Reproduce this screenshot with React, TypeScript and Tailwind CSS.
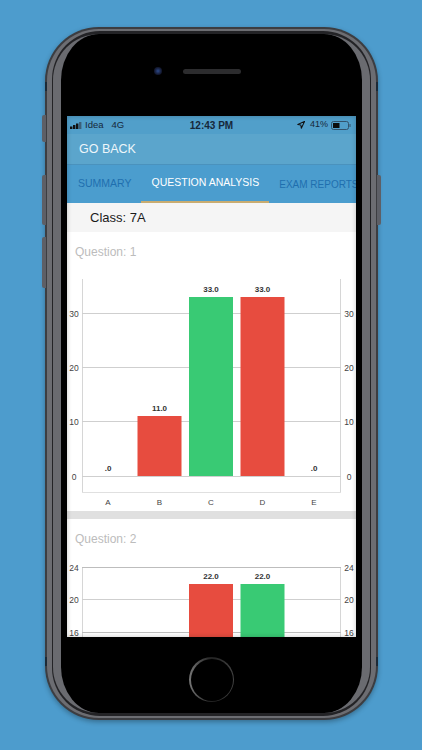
const FONT = "font-['Liberation_Sans',Arial,sans-serif]";

type Bar = { x: number; top: number; color: string; label: string };
type Tick = { y: number; label: string; strong?: boolean };

const RED = '#e74c3f';
const GREEN = '#39ca74';

function BarChart({ height, top, bottom, base, ticks, bars, categories, closed }: {
  height: number;
  top: number;
  bottom: number;
  base: number;
  ticks: Tick[];
  bars: Bar[];
  categories?: string[];
  closed?: boolean;
}) {
  return (
    <svg width={290} height={height} className="block" fontFamily="Liberation Sans, Arial, sans-serif">
      <line x1={15.5} x2={15.5} y1={top} y2={bottom} stroke="#d6d6d6" />
      <line x1={273.5} x2={273.5} y1={top} y2={bottom} stroke="#d6d6d6" />
      {closed && <line x1={15} x2={274} y1={bottom - 0.5} y2={bottom - 0.5} stroke="#e0e0e0" />}
      {ticks.map((t) => (
        <g key={t.label}>
          <line x1={15} x2={274} y1={t.y} y2={t.y} stroke={t.strong ? '#bdbdbd' : '#cfcfcf'} />
          <text x={7} y={t.y + 3} fontSize={8.5} fill="#444" textAnchor="middle">{t.label}</text>
          <text x={282} y={t.y + 3} fontSize={8.5} fill="#444" textAnchor="middle">{t.label}</text>
        </g>
      ))}
      {bars.map((b) => (
        <g key={b.x}>
          {b.color !== 'none' && (
            <rect x={b.x - 22} y={b.top} width={44} height={base - b.top} fill={b.color} />
          )}
          <text x={b.x} y={b.top - 5} fontSize={8} fontWeight={700} fill="#333" textAnchor="middle">{b.label}</text>
        </g>
      ))}
      {categories?.map((c, i) => (
        <text key={c} x={41 + i * 51.5} y={235} fontSize={8} fill="#444" textAnchor="middle">{c}</text>
      ))}
    </svg>
  );
}

function StatusBar() {
  return (
    <div className="h-[18px] flex items-center justify-between pl-[3px] pr-[5px] bg-[#519fca] text-[9.5px] text-[#16283a]">
      <div className="flex items-center gap-[2px] w-[90px]">
        <svg width="13" height="7" viewBox="0 0 13 7">
          <rect x="0" y="4.5" width="2.4" height="2.5" fill="#111" />
          <rect x="3" y="3" width="2.4" height="4" fill="#111" />
          <rect x="6" y="1.5" width="2.4" height="5.5" fill="#111" />
          <rect x="9" y="0" width="2.4" height="7" fill="#3d5f78" />
        </svg>
        <span>Idea</span>
        <span className="ml-[6px]">4G</span>
      </div>
      <span className="font-bold text-[10px]">12:43 PM</span>
      <div className="flex items-center justify-end w-[88px]">
        <svg width="8" height="8" viewBox="0 0 10 10" className="mr-[5px]">
          <path d="M9.5.5 1 4.4l3.8.6.6 4z" fill="none" stroke="#111" strokeWidth="1.3" strokeLinejoin="round" />
        </svg>
        <span className="text-[9px] mr-[3px]">41%</span>
        <svg width="20" height="9" viewBox="0 0 20 9">
          <rect x=".5" y=".5" width="17" height="8" rx="2" fill="none" stroke="#33536b" />
          <rect x="2" y="2" width="6.5" height="5" fill="#0c0c0c" />
          <rect x="18.5" y="3" width="1" height="3" fill="#33536b" />
        </svg>
      </div>
    </div>
  );
}

function Tabs() {
  return (
    <div className="h-[38px] flex pl-px bg-[#4b9dce] text-[10.5px] whitespace-nowrap overflow-hidden shadow-[0_1px_1px_rgba(0,0,0,0.25)]">
      <div className="px-[10px] flex items-center text-[#1f6fae]">SUMMARY</div>
      <div className="px-[10px] flex items-center text-white border-b-2 border-[#c9ac70]">QUESTION ANALYSIS</div>
      <div className="px-[10px] flex items-center text-[10px] text-[#1f6fae]">EXAM REPORTS</div>
    </div>
  );
}

function QuestionTitle({ children }: { children: string }) {
  return <div className="h-[38px] pl-[8px] pt-[12px] text-[12px] leading-[16px] text-[#bcbcbc]">{children}</div>;
}

export default function App() {
  return (
    <div className={`${FONT} w-[422px] h-[750px] bg-[#4d9ccd] pt-[27px] pl-[45px] overflow-hidden`}>
      <div className="relative w-[333px] h-[693px]">
        {/* side buttons */}
        <div className="absolute left-[-3px] top-[88px] w-[4px] h-[27px] rounded-l-[2px] bg-[#5d5f66]" />
        <div className="absolute left-[-3px] top-[148px] w-[4px] h-[50px] rounded-l-[2px] bg-[#5d5f66]" />
        <div className="absolute left-[-3px] top-[210px] w-[4px] h-[51px] rounded-l-[2px] bg-[#5d5f66]" />
        <div className="absolute right-[-3px] top-[148px] w-[4px] h-[50px] rounded-r-[2px] bg-[#5d5f66]" />

        <div className="h-full rounded-[54px] bg-[#3c3d41] p-[2px] shadow-[0_2px_5px_rgba(0,0,0,0.3)]">
          <div className="h-full rounded-[52px] bg-[#6c6d72] px-[5px] py-[2px]">
            <div className="h-full rounded-[48px] bg-[#232326] px-[1px] py-[3px]">
              <div className="h-full rounded-[46px] bg-black border-x-[8px] border-y-0 border-[#6a6b70] px-[6px] pt-[33px]">
                <div className="h-[49px] flex justify-center gap-[21px] pr-[28px]">
                  <div className="w-[8px] h-[8px] rounded-full bg-[radial-gradient(circle,#2d4a8a_0%,#141a33_60%,#0d0f1a_100%)]" />
                  <div className="w-[58px] h-[5px] mt-[2px] rounded-full bg-[#2c2c2e]" />
                </div>

                <div className="relative h-[521px] overflow-hidden bg-white">
                  <StatusBar />
                  <div className="h-[31px] flex items-center pl-[12px] pt-[1px] bg-[#5ba5cc] text-[12.5px] text-[#eef6fa] border-b border-[#4a92bd]">GO BACK</div>
                  <Tabs />
                  <div className="h-[29px] flex items-center pl-[23px] bg-[#f5f5f5] text-[13px] text-[#1b1b1b]">Class: 7A</div>

                  <QuestionTitle>Question: 1</QuestionTitle>
                  <BarChart
                    height={241}
                    top={9}
                    bottom={223}
                    base={206}
                    closed
                    ticks={[
                      { y: 43.5, label: '30' },
                      { y: 97.5, label: '20' },
                      { y: 151.5, label: '10' },
                      { y: 206.5, label: '0' },
                    ]}
                    bars={[
                      { x: 41, top: 206, color: 'none', label: '.0' },
                      { x: 92.5, top: 146, color: RED, label: '11.0' },
                      { x: 144, top: 27, color: GREEN, label: '33.0' },
                      { x: 195.5, top: 27, color: RED, label: '33.0' },
                      { x: 247, top: 206, color: 'none', label: '.0' },
                    ]}
                    categories={['A', 'B', 'C', 'D', 'E']}
                  />
                  <div className="h-[8px] bg-[#e0e0e0]" />

                  <QuestionTitle>Question: 2</QuestionTitle>
                  <BarChart
                    height={80}
                    top={10}
                    bottom={80}
                    base={80}
                    ticks={[
                      { y: 10.5, label: '24', strong: true },
                      { y: 42.5, label: '20' },
                      { y: 75.5, label: '16', strong: true },
                    ]}
                    bars={[
                      { x: 144, top: 27, color: RED, label: '22.0' },
                      { x: 195.5, top: 27, color: GREEN, label: '22.0' },
                    ]}
                  />
                  {/* glass shading along the screen edges */}
                  <div className="absolute inset-0 pointer-events-none shadow-[inset_0_0_5px_rgba(0,0,0,0.22)]" />
                </div>

                <div className="flex justify-center pt-[20px]">
                  <div className="w-[45px] h-[45px] rounded-full bg-gradient-to-r from-[#777] via-[#222] to-[#444] p-[1.5px]">
                    <div className="w-full h-full rounded-full bg-black" />
                  </div>
                </div>
              </div>
            </div>
          </div>
        </div>

        {/* antenna bands on the frame */}
        <div className="absolute left-0 top-[55px] w-[2px] h-[9px] bg-[#1d2a36]" />
        <div className="absolute right-0 top-[55px] w-[2px] h-[9px] bg-[#1d2a36]" />
        <div className="absolute left-0 top-[630px] w-[2px] h-[9px] bg-[#1d2a36]" />
        <div className="absolute right-0 top-[630px] w-[2px] h-[9px] bg-[#1d2a36]" />
      </div>
    </div>
  );
}
